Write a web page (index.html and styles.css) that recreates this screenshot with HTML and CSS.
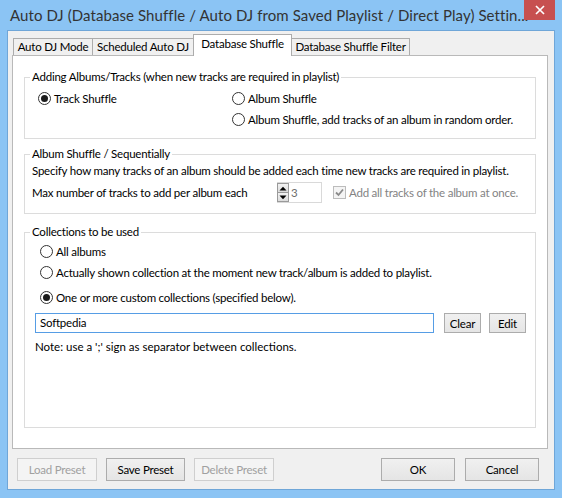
FILE: index.html
```html
<!DOCTYPE html>
<html>
<head>
<meta charset="utf-8">
<link rel="stylesheet" href="styles.css">
</head>
<body>
<div class="window">
  <div class="titlebar">
    <span class="title">Auto DJ (Database Shuffle / Auto DJ from Saved Playlist / Direct Play) Settin...</span>
    <span class="close"><svg width="10" height="10" viewBox="0 0 10 10"><path d="M1 1L9 9M9 1L1 9" stroke="#fff" stroke-width="1.7"/></svg></span>
  </div>
  <div class="client">
    <div class="tabs">
      <div class="tab t1">Auto DJ Mode</div>
      <div class="tab t2">Scheduled Auto DJ</div>
      <div class="tab t3 active">Database Shuffle</div>
      <div class="tab t4">Database Shuffle Filter</div>
    </div>
    <div class="panel">
      <fieldset class="group g1">
        <legend>Adding Albums/Tracks (when new tracks are required in playlist)</legend>
        <div class="g1-grid">
          <div class="opt"><span class="radio on"></span>Track Shuffle</div>
          <div class="col2">
            <div class="opt"><span class="radio"></span>Album Shuffle</div>
            <div class="opt"><span class="radio"></span>Album Shuffle, add tracks of an album in random order.</div>
          </div>
        </div>
      </fieldset>
      <fieldset class="group g2">
        <legend>Album Shuffle / Sequentially</legend>
        <div class="g2-inner">
          <div class="line">Specify how many tracks of an album should be added each time new tracks are required in playlist.</div>
          <div class="maxrow">
            <span class="maxlabel">Max number of tracks to add per album each</span>
            <span class="spin">
              <span class="spin-btns">
                <span class="sb"><svg width="8" height="5" viewBox="0 0 8 5"><path d="M0.5 4.5L4 0.8L7.5 4.5Z" fill="#000"/></svg></span>
                <span class="sb"><svg width="8" height="5" viewBox="0 0 8 5"><path d="M0.5 0.5L4 4.2L7.5 0.5Z" fill="#000"/></svg></span>
              </span>
              <span class="spin-val">3</span>
            </span>
            <span class="check"><svg width="11" height="11" viewBox="0 0 11 11"><path d="M2 5.5L4.5 8L9 2.5" fill="none" stroke="#8a8a8a" stroke-width="1.8"/></svg></span>
            <span class="disabled-text">Add all tracks of the album at once.</span>
          </div>
        </div>
      </fieldset>
      <fieldset class="group g3">
        <legend>Collections to be used</legend>
        <div class="g3-inner">
          <div class="opt ind"><span class="radio"></span>All albums</div>
          <div class="opt ind"><span class="radio"></span>Actually shown collection at the moment new track/album is added to playlist.</div>
          <div class="opt ind r3"><span class="radio on"></span>One or more custom collections (specified below).</div>
          <div class="inputrow">
            <span class="textbox">Softpedia</span>
            <span class="btn small clear">Clear</span>
            <span class="btn small edit">Edit</span>
          </div>
          <div class="note">Note: use a ';' sign as separator between collections.</div>
        </div>
      </fieldset>
    </div>
    <div class="buttons">
      <span class="btn dis w80">Load Preset</span>
      <span class="btn w79">Save Preset</span>
      <span class="btn dis w80">Delete Preset</span>
      <span class="spacer"></span>
      <span class="btn w74">OK</span>
      <span class="btn w74 cancel">Cancel</span>
    </div>
  </div>
</div>
</body>
</html>
```
FILE: styles.css
```css
* { box-sizing: border-box; }
html, body { margin: 0; padding: 0; }
body {
  background: #88c2f3;
  font-family: Lato, "Liberation Sans", sans-serif;
  font-size: 11.5px;
  letter-spacing: -0.22px;
  color: #000;
}
.window {
  width: 562px;
  height: 498px;
  display: flex;
  flex-direction: column;
  background: #8bc4f4;
}
.titlebar {
  height: 30px;
  flex: none;
  display: flex;
  align-items: flex-start;
  padding-left: 10px;
}
.title {
  flex: 1;
  min-width: 0;
  font-size: 15px;
  letter-spacing: 0.08px;
  line-height: 30px;
  color: #333;
  white-space: nowrap;
}
.close {
  width: 31px;
  height: 20px;
  margin-right: 7px;
  background: #c75050;
  display: flex;
  align-items: center;
  justify-content: center;
  flex: none;
}
.client {
  flex: 1;
  margin: 0 7px 8px 7px;
  background: #f0f0f0;
  border: 1px solid #6fa6d8;
  display: flex;
  flex-direction: column;
}
.tabs {
  display: flex;
  align-items: flex-end;
  height: 21px;
  margin: 3px 0 0 5px;
  flex: none;
}
.tab {
  height: 17px;
  border: 1px solid #acacac;
  border-bottom: none;
  background: #f0f0f0;
  line-height: 15px;
  text-align: center;
  white-space: nowrap;
  margin-right: -1px;
}
.t1 { width: 80px; }
.t2 { width: 102px; }
.t3 { width: 99px; }
.t4 { width: 119px; }
.tab.active {
  height: 22px;
  line-height: 18px;
  background: #fff;
  margin-bottom: -1px;
  position: relative;
  z-index: 1;
}
.panel {
  width: 536px;
  height: 394px;
  margin-left: 4px;
  background: #fff;
  border: 1px solid #b9b9b9;
  padding: 13px 11px 20px 11px;
  display: flex;
  flex-direction: column;
  flex: none;
}
.group {
  margin: 0;
  padding: 0;
  border: 1px solid #dcdcdc;
  min-width: 0;
}
.group legend {
  padding: 0 2px;
  margin-left: 5px;
  line-height: 16px;
}
.g1-grid {
  display: grid;
  grid-template-columns: 194px 1fr;
  padding: 3px 0 8px 13px;
}
.opt {
  display: flex;
  align-items: center;
  height: 21px;
  white-space: nowrap;
}
.radio {
  width: 13px;
  height: 13px;
  border-radius: 50%;
  border: 1px solid #333;
  background: #fff;
  margin-right: 3px;
  display: flex;
  align-items: center;
  justify-content: center;
  flex: none;
}
.radio.on::after {
  content: "";
  width: 7px;
  height: 7px;
  border-radius: 50%;
  background: #1b1b1b;
}
.g2 { margin-top: 7px; }
.g2-inner { padding: 1px 0 10px 7px; }
.line { line-height: 16px; white-space: nowrap; }
.maxrow {
  margin-top: 3px;
  height: 21px;
  display: flex;
  align-items: center;
}
.maxlabel { width: 245px; flex: none; }
.spin {
  width: 45px;
  height: 21px;
  border: 1px solid #d9d9d9;
  background: #fff;
  display: flex;
  align-items: center;
  flex: none;
}
.spin-btns {
  width: 12px;
  height: 19px;
  display: flex;
  flex-direction: column;
  border: 1px solid #9a9a9a;
  margin-left: -1px;
}
.sb {
  flex: 1;
  display: flex;
  align-items: center;
  justify-content: center;
  background: linear-gradient(#f2f2f2, #dcdcdc);
}
.sb + .sb { border-top: 1px solid #9a9a9a; }
.spin-val { margin-left: 2px; color: #6d6d6d; }
.check {
  width: 13px;
  height: 13px;
  border: 1px solid #bcbcbc;
  background: #f4f4f4;
  margin-left: 11px;
  margin-right: 3px;
  display: flex;
  align-items: center;
  justify-content: center;
  flex: none;
}
.disabled-text { color: #838383; white-space: nowrap; }
.g3 { margin-top: 10px; flex: 1; }
.g3-inner { padding: 1px 0 0 10px; }
.ind { margin-left: 5px; }
.r3 { margin-top: 4px; }
.inputrow {
  margin-top: 5px;
  display: flex;
  align-items: center;
}
.textbox {
  width: 399px;
  height: 20px;
  border: 1px solid #569de5;
  background: #fff;
  padding-left: 4px;
  line-height: 18px;
}
.note { margin-top: 6px; line-height: 16px; letter-spacing: 0; }
.btn {
  display: flex;
  align-items: center;
  justify-content: center;
  height: 23px;
  border: 1px solid #acacac;
  background: linear-gradient(#f0f0f0, #e5e5e5);
  white-space: nowrap;
  flex: none;
}
.btn.small { height: 20px; width: 37px; }
.clear { margin-left: 10px; }
.edit { margin-left: 8px; }
.btn.dis {
  border-color: #cfcfcf;
  background: #f4f4f4;
  color: #a0a0a0;
}
.buttons {
  margin-top: 9px;
  padding: 0 15px 0 9px;
  display: flex;
  gap: 9px;
  flex: none;
}
.spacer { flex: 1; }
.w80 { width: 80px; }
.w79 { width: 79px; }
.w74 { width: 74px; }
.cancel { margin-left: 1px; }
```
